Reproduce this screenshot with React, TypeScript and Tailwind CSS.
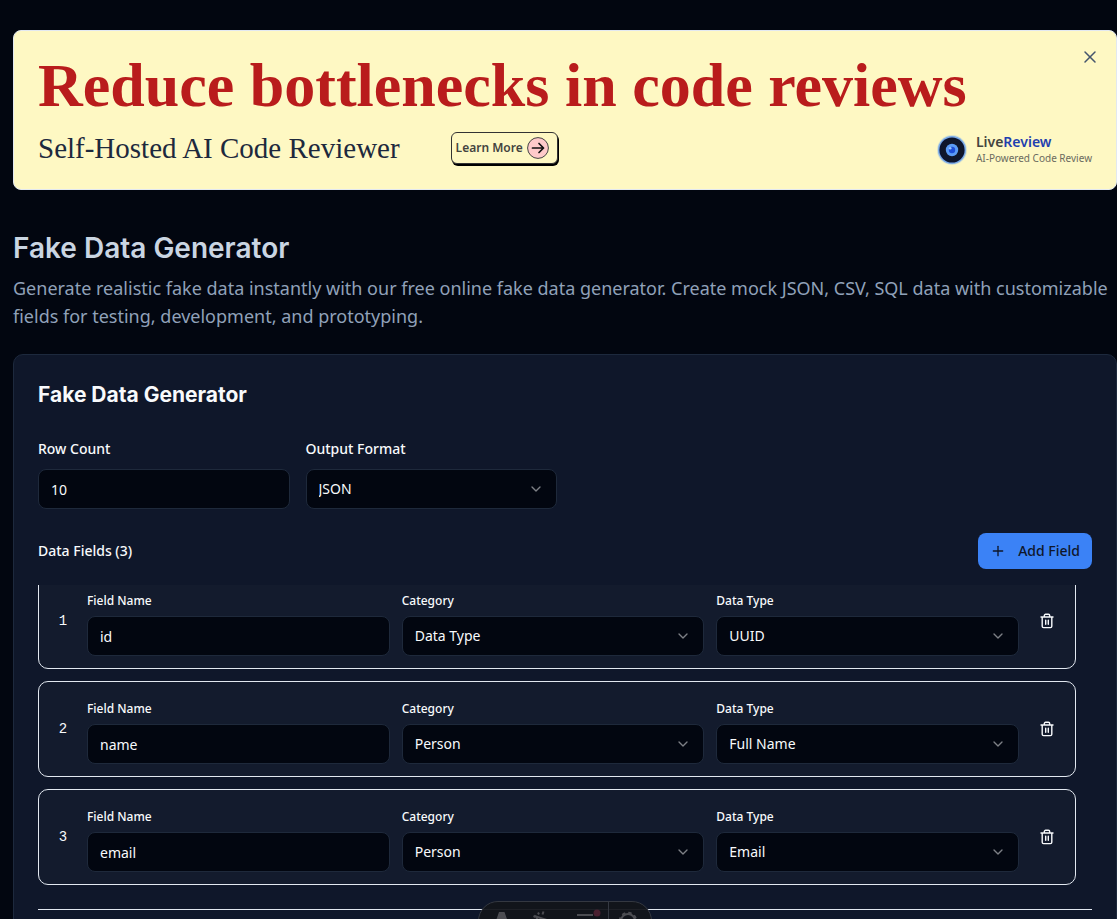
import { ChevronDown, Plus, X } from "lucide-react";
import { useState } from "react";

const SANS = "font-['Noto_Sans',sans-serif]";

type Field = { name: string; category: string; type: string };

const INITIAL: Field[] = [
  { name: "id", category: "Data Type", type: "UUID" },
  { name: "name", category: "Person", type: "Full Name" },
  { name: "email", category: "Person", type: "Email" },
];

const CONTROL =
  "block h-10 w-full rounded-lg border border-[#1e293b] bg-[#020610] px-3 text-sm text-slate-50 outline-none";

function Select({ id, value, options, onChange }: { id: string; value: string; options: string[]; onChange?: (v: string) => void }) {
  return (
    <div className="grid items-center">
      <select
        id={id}
        value={value}
        onChange={(e) => onChange?.(e.target.value)}
        className={`${CONTROL} col-start-1 row-start-1 appearance-none`}
      >
        {options.map((o) => (
          <option key={o}>{o}</option>
        ))}
      </select>
      <ChevronDown className="pointer-events-none col-start-1 row-start-1 mr-[13px] size-4 justify-self-end text-slate-50 opacity-50" />
    </div>
  );
}

function Trash() {
  return (
    <svg viewBox="0 0 16 16" className="size-4" fill="none" stroke="currentColor" strokeWidth="1.4" strokeLinecap="round" strokeLinejoin="round">
      <path d="M2 4h12M3.2 4v9.2c0 .8.6 1.4 1.4 1.4h6.8c.8 0 1.4-.6 1.4-1.4V4M5.3 4V2.6c0-.7.6-1.3 1.3-1.3h2.8c.7 0 1.3.6 1.3 1.3V4M6.7 7.3v4M9.3 7.3v4" />
    </svg>
  );
}

function Logo() {
  return (
    <svg viewBox="0 0 32 32" className="size-8" aria-hidden="true">
      <circle cx="16" cy="16" r="15" fill="#60a5fa" opacity="0.25" />
      <circle cx="16" cy="16" r="14" fill="#3b82f6" opacity="0.6" />
      <circle cx="16" cy="16" r="12.6" fill="#0b1533" />
      <circle cx="16" cy="16" r="11.5" fill="#0f172a" />
      <circle cx="16" cy="16" r="6.2" fill="#5b9cf5" />
      <circle cx="16" cy="16" r="3.2" fill="#1d4ed8" />
      <circle cx="14.2" cy="14.2" r="1.3" fill="#93c5fd" />
    </svg>
  );
}

function Banner() {
  return (
    <section className="relative rounded-lg border border-slate-200 bg-[#fef8c3] p-6">
      <h2 className="mb-4 font-['Liberation_Serif',serif] text-[62px] leading-[60px] font-bold whitespace-nowrap text-[#b91c1c]">
        Reduce bottlenecks in code reviews
      </h2>
      <div className="flex h-[34px] items-center">
        <p className="mr-[51px] font-['Liberation_Serif',serif] text-[29px] leading-8 whitespace-nowrap text-slate-800">Self-Hosted AI Code Reviewer</p>
        <a
          href="#learn"
          className="flex h-8 items-center gap-1 rounded-md border border-[#333] bg-[#fef8c3] pr-2 pl-1 text-xs font-semibold whitespace-nowrap text-[#44443f] shadow-[1px_2px_0_0_#000]"
        >
          Learn More
          <svg viewBox="0 0 22 22" className="size-[22px]" fill="none">
            <circle cx="11" cy="11" r="10.4" fill="#fecaca" stroke="#444" />
            <path d="M5.500 11h11M12 6.500l4.500 4.500-4.500 4.500" stroke="#111" strokeWidth="1.7" strokeLinecap="round" strokeLinejoin="round" />
          </svg>
        </a>
        <div className="mt-1 ml-auto flex items-center gap-2">
          <Logo />
          <div>
            <p className="text-sm leading-4 font-semibold text-[#44443f]">
              Live<span className="text-[#1e40af]">Review</span>
            </p>
            <p className="text-[10px] leading-4 text-[#6b6b5f]">AI-Powered Code Review</p>
          </div>
        </div>
      </div>
      <button aria-label="Close" className="absolute top-4 right-4 flex size-5 items-center justify-center text-slate-600">
        <X className="size-5" strokeWidth={1.8} />
      </button>
    </section>
  );
}

function FieldRow({ field, index, onName, onRemove }: { field: Field; index: number; onName: (v: string) => void; onRemove: () => void }) {
  const label = "block text-xs leading-[30px] font-medium";
  return (
    <li className="flex shrink-0 items-center gap-3 rounded-[10px] border border-slate-200 bg-[#131b2d] p-3">
      <span className="w-6 text-center font-['Liberation_Mono',monospace] text-sm">{index + 1}</span>
      <div className="grid flex-1 grid-cols-3 gap-3">
        <div>
          <label htmlFor={`name-${index}`} className={label}>Field Name</label>
          <input id={`name-${index}`} value={field.name} onChange={(e) => onName(e.target.value)} className={CONTROL} />
        </div>
        <div>
          <label htmlFor={`category-${index}`} className={label}>Category</label>
          <Select id={`category-${index}`} value={field.category} options={[field.category]} />
        </div>
        <div>
          <label htmlFor={`type-${index}`} className={label}>Data Type</label>
          <Select id={`type-${index}`} value={field.type} options={[field.type]} />
        </div>
      </div>
      <button aria-label={`Remove ${field.name}`} onClick={onRemove} className="flex size-8 items-center justify-center">
        <Trash />
      </button>
    </li>
  );
}

function Toolbar() {
  return (
    <div className="fixed inset-x-0 bottom-0 flex justify-center pl-[13px]">
      <div className="-mb-[22px] flex h-10 w-[174px] overflow-hidden rounded-full border border-[#343841] bg-[#13151a]/95 text-[#4c4d52]">
        <svg viewBox="0 0 172 38" className="h-[38px] w-[172px]" fill="none" stroke="currentColor" strokeWidth="2">
          <path d="M20 10h5.500l7 20h-6l-3.700-11-3.800 11h-6z" fill="currentColor" stroke="none" />
          <path d="M57 14.500l14 4.500-5 3-3 6z" />
          <path d="M59 10.500l1 2M64.500 9.500l-1 3M54.500 14l2 1" />
          <path d="M98 13h16M98 21h16" />
          <circle cx="118" cy="11" r="3.500" fill="#4a2030" stroke="none" />
          <path d="M129.500 0v38" stroke="#343841" strokeWidth="1" />
          <circle cx="149" cy="19" r="7" />
          <circle cx="149" cy="19" r="8.200" strokeDasharray="3.440 3" />
        </svg>
      </div>
    </div>
  );
}

export default function App() {
  const [fields, setFields] = useState(INITIAL);
  const [count, setCount] = useState("10");
  const [format, setFormat] = useState("JSON");

  return (
    <div className={`${SANS} h-screen overflow-hidden bg-[#020610] pt-[30px] pl-[13px] text-slate-50`}>
      <Banner />
      <header className="mt-10 mb-6">
        <h1 className="mb-2 font-['Inter',sans-serif] text-[28px] leading-9 font-semibold text-slate-300">Fake Data Generator</h1>
        <p className="text-lg leading-7 text-slate-400">
          Generate realistic fake data instantly with our free online fake data generator. Create mock JSON, CSV, SQL data with customizable fields for testing, development, and prototyping.
        </p>
      </header>
      <main className="flex flex-col gap-6 rounded-[10px] border border-slate-800 bg-[#0f172a] p-6">
        <h2 className="font-['Inter',sans-serif] text-[21px] leading-8 font-bold">Fake Data Generator</h2>
        <div className="grid grid-cols-4 gap-4">
          <div>
            <label htmlFor="rows" className="mb-1.5 block text-sm leading-7 font-medium">Row Count</label>
            <input id="rows" value={count} onChange={(e) => setCount(e.target.value)} className={CONTROL} />
          </div>
          <div>
            <label htmlFor="format" className="mb-1.5 block text-sm leading-7 font-medium">Output Format</label>
            <Select id="format" value={format} options={["JSON", "CSV", "SQL"]} onChange={setFormat} />
          </div>
        </div>
        <section>
          <div className="mb-4 flex items-center justify-between">
            <h3 className="text-sm font-medium">Data Fields ({fields.length})</h3>
            <button
              onClick={() => setFields([...fields, { name: "field", category: "Person", type: "Email" }])}
              className="flex h-9 items-center gap-3 rounded-lg bg-[#3b82f6] px-3 text-sm font-medium text-[#0f172a]"
            >
              <Plus className="size-4" />
              Add Field
            </button>
          </div>
          <ul className="flex max-h-[300px] flex-col justify-end gap-3 overflow-hidden pr-4">
            {fields.map((f, i) => (
              <FieldRow
                key={i}
                field={f}
                index={i}
                onName={(name) => setFields(fields.map((x, j) => (j === i ? { ...x, name } : x)))}
                onRemove={() => setFields(fields.filter((_, j) => j !== i))}
              />
            ))}
          </ul>
        </section>
        <hr className="border-slate-200" />
      </main>
      <Toolbar />
    </div>
  );
}
